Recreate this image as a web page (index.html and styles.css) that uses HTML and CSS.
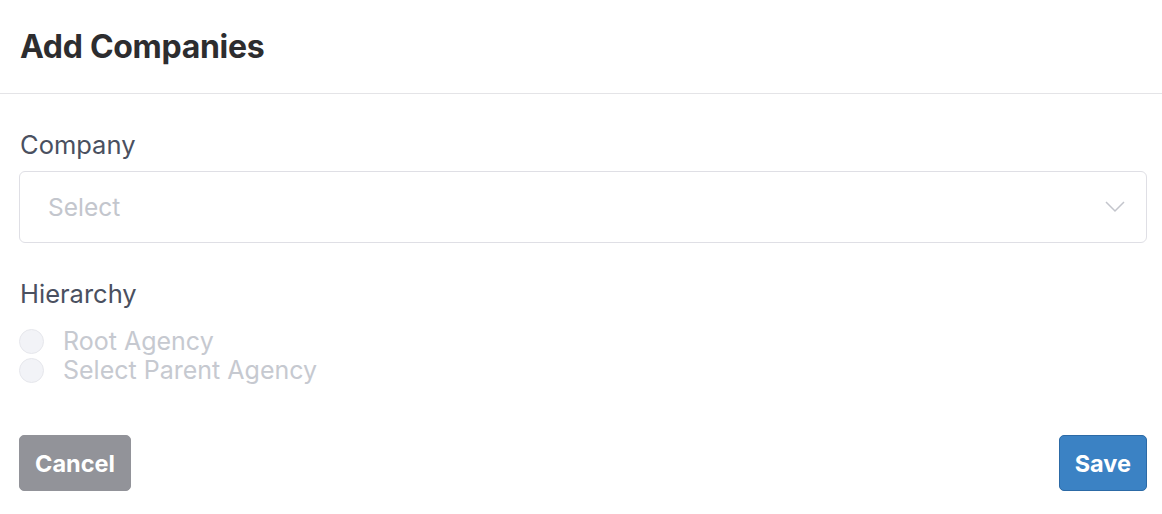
FILE: index.html
```html
<!doctype html>
<html lang="en">
  <head>
    <title>Add Companies</title>
    <meta name="viewport" content="width=device-width, initial-scale=1" />
    <link rel="stylesheet" href="styles.css">
  </head>
  <body>
    <div class="modal">
      <div class="modal-header">
        <h1 class="modal-title">Add Companies</h1>
      </div>
      <div class="modal-body">
        <div class="field">
          <label class="field-label">Company</label>
          <div class="select">
            <span class="select-placeholder">Select</span>
            <svg class="select-arrow" width="20" height="12" viewBox="0 0 20 12">
              <path d="M1 1 L10 10 L19 1" fill="none" stroke="#c3c5cc" stroke-width="1.5" />
            </svg>
          </div>
        </div>
        <div class="field">
          <label class="field-label">Hierarchy</label>
          <div class="radios">
            <label class="radio"><span class="radio-dot"></span>Root Agency</label>
            <label class="radio"><span class="radio-dot"></span>Select Parent Agency</label>
          </div>
        </div>
      </div>
      <div class="modal-footer">
        <button class="btn btn-cancel">Cancel</button>
        <button class="btn btn-save">Save</button>
      </div>
    </div>
  </body>
</html>
```

FILE: styles.css
```css
body {
  margin: 0;
  background-color: #ffffff;
  font-family: Inter, "Liberation Sans", sans-serif;
}
.modal {
  width: 1162px;
}
.modal-header {
  height: 94px;
  display: flex;
  align-items: center;
  padding: 0 20px;
  border-bottom: 1px solid #e4e4e7;
  box-sizing: border-box;
}
.modal-title {
  margin: 0;
  font-size: 32px;
  font-weight: 700;
  color: #2d2d2f;
  letter-spacing: -0.3px;
}
.modal-body {
  padding: 36px 15px 0 19px;
}
.field {
  margin-bottom: 36px;
}
.field-label {
  display: block;
  font-size: 25.5px;
  color: #4a5060;
  line-height: 30px;
  margin-bottom: 11px;
  padding-left: 1px;
}
.select {
  height: 72px;
  border: 1px solid #dfdfe5;
  border-radius: 6px;
  box-sizing: border-box;
  display: flex;
  align-items: center;
  justify-content: space-between;
  padding: 0 21px 0 28px;
}
.select-placeholder {
  font-size: 24.5px;
  color: #c3c6cd;
}
.radios {
  display: flex;
  flex-direction: column;
  gap: 4px;
  padding-top: 9px;
}
.radio {
  display: flex;
  align-items: center;
  gap: 19px;
  font-size: 25px;
  line-height: 25px;
  color: #c6c9d0;
}
.radio-dot {
  width: 23px;
  height: 23px;
  border-radius: 50%;
  background-color: #f2f3f7;
  border: 1px solid #e6e7ec;
}
.modal-footer {
  display: flex;
  justify-content: space-between;
  padding: 16px 15px 0 19px;
}
.btn {
  height: 56px;
  border-radius: 5px;
  font-family: Inter, "Liberation Sans", sans-serif;
  font-size: 23.5px;
  font-weight: 700;
  color: #ffffff;
  padding: 0 15px;
  cursor: pointer;
}
.btn-cancel {
  background-color: #929399;
  border: 1px solid #929399;
}
.btn-save {
  background-color: #3b82c4;
  border: 1px solid #2c6aa6;
}
```
